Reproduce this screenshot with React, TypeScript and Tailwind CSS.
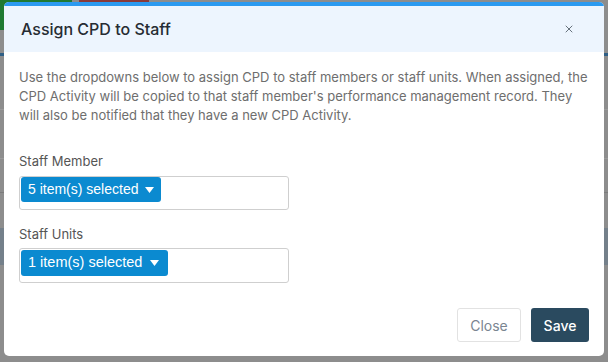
import { X } from "lucide-react";

function Multi({ label, wide }: { label: string; wide?: boolean }) {
  return (
    <div
      className={
        wide
          ? "flex h-[35px] w-[270px] items-start rounded-[3px] border border-[#cfcfcf] bg-white pl-px pt-px"
          : "flex h-[34px] w-[270px] items-start rounded-[3px] border border-[#cfcfcf] bg-white pl-px"
      }
    >
      <span
        className={
          wide
            ? "flex h-[26px] items-center gap-[8px] rounded-[3px] bg-[#0b8ad0] pl-[7px] pr-[9px] font-['Liberation_Sans',sans-serif] text-[14.5px] text-white"
            : "flex h-[25px] items-center gap-[7px] rounded-[3px] bg-[#0b8ad0] pl-[7px] pr-[7px] font-['Liberation_Sans',sans-serif] text-[14px] text-white"
        }
      >
        {label}
        <svg width="9" height="6" viewBox="0 0 9 6">
          <path d="M0 0h9L4.5 6z" fill="white" />
        </svg>
      </span>
    </div>
  );
}

export default function App() {
  return (
    <div className="relative h-[362px] w-[608px] overflow-hidden bg-[#8d8d8d] font-['Inter',sans-serif]">
      {/* page behind the overlay */}
      <div className="flex h-[30px]">
        <div className="w-[72px] bg-[#1f7a32]" />
        <div className="ml-[7px] h-[2px] w-[70px] bg-[#8a3a3a]" />
      </div>
      <div className="mt-[23px] h-[3px] bg-[#2f5f86]" />
      <div className="mt-[53px] h-px bg-[#9a9a9a]" />
      <div className="mt-[48px] h-px bg-[#9a9a9a]" />
      <div className="mt-[33px] h-px bg-[#7b7b7b]" />
      <div className="mt-[35px] h-[37px] bg-[#74808a]" />

      <div className="absolute left-[4px] top-[2px] flex h-[354px] w-[600px] flex-col overflow-hidden rounded-[5px] bg-white">
        <div className="h-[4px] bg-[#2b9af0]" />
        <div className="flex h-[46px] items-center justify-between bg-[#edf5fe] pl-[17px] pr-[29px]">
          <h1 className="text-[16px] font-medium text-[#262c33]">Assign CPD to Staff</h1>
          <X size={12} strokeWidth={1.5} className="mt-[-1px] text-[#3a4550]" />
        </div>
        <div className="flex flex-1 flex-col pl-[15px] pr-[12px] pt-[16px]">
          <p className="text-[13px] leading-[19px] text-[#6e6e6e]">
            Use the dropdowns below to assign CPD to staff members or staff units. When assigned, the CPD Activity
            will be copied to that staff member's performance management record. They will also be notified that
            they have a new CPD Activity.
          </p>
          <div className="mt-[28px] text-[13px] leading-[16px] text-[#555]">Staff Member</div>
          <div className="mt-[7px]">
            <Multi label="5 item(s) selected" />
          </div>
          <div className="mt-[16px] text-[13px] leading-[16px] text-[#555]">Staff Units</div>
          <div className="mt-[6px]">
            <Multi label="1 item(s) selected" wide />
          </div>
          <div className="mb-[14px] mr-[3px] mt-auto flex justify-end gap-[10px]">
            <button className="h-[34px] w-[64px] rounded-[3px] border border-[#e2e2e2] bg-white text-[14px] text-[#7a8591]">
              Close
            </button>
            <button className="h-[34px] w-[58px] rounded-[3px] bg-[#2a4a5f] text-[14px] font-medium text-white">
              Save
            </button>
          </div>
        </div>
      </div>
    </div>
  );
}
